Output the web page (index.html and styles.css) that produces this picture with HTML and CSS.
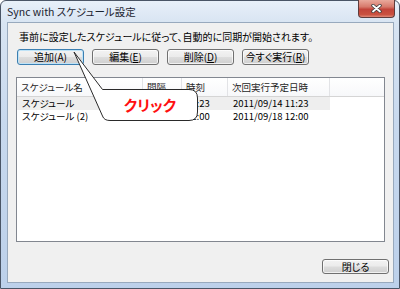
FILE: index.html
```html
<!DOCTYPE html>
<html lang="ja">
<head>
    <meta charset="UTF-8">
    <title>Sync with スケジュール設定</title>
    <link rel="stylesheet" href="styles.css">
</head>
<body>

<div class="window">
    <div class="titlebar">
        <span class="title">Sync with スケジュール設定</span>
        <span class="close">
            <svg width="11" height="9" viewBox="0 0 11 9">
                <path d="M2 1.5 L9 7.5 M9 1.5 L2 7.5" stroke="#3a3a3a" stroke-width="3.4" stroke-linecap="round"/>
                <path d="M2 1.5 L9 7.5 M9 1.5 L2 7.5" stroke="#fff" stroke-width="1.8" stroke-linecap="round"/>
            </svg>
        </span>
    </div>

    <div class="client">
        <p class="lead">事前に設定したスケジュールに従って、自動的に同期が開始されます。</p>

        <div class="toolbar">
            <button class="btn btn-default">追加(A)</button>
            <button class="btn">編集(<u>E</u>)</button>
            <button class="btn">削除(<u>D</u>)</button>
            <button class="btn">今すぐ実行(<u>R</u>)</button>
        </div>

        <div class="listview">
            <div class="lv-row lv-head">
                <span>スケジュール名</span>
                <span>間隔</span>
                <span>時刻</span>
                <span>次回実行予定日時</span>
                <span></span>
            </div>
            <div class="lv-row hot">
                <span>スケジュール</span>
                <span></span>
                <span class="time">11:23</span>
                <span>2011/09/14 11:23</span>
            </div>
            <div class="lv-row">
                <span>スケジュール (2)</span>
                <span></span>
                <span class="time">12:00</span>
                <span>2011/09/18 12:00</span>
            </div>
        </div>

        <div class="footer">
            <button class="btn">閉じる</button>
        </div>
    </div>

    <!-- annotation balloon over the dialog -->
    <svg class="balloon" width="400" height="289" viewBox="0 0 400 289">
        <path d="M74 52 L102.5 89.5 L189 89.5 Q197.5 89.5 197.5 98 L197.5 112 Q197.5 120.5 189 120.5 L110 120.5 Q104 120.5 102.5 116 Z"
              fill="#fff" stroke="#2a2a2a" stroke-width="1"/>
    </svg>
    <div class="balloon-text">クリック</div>
</div>

</body>
</html>
```

FILE: styles.css
```css
html, body {
    margin: 0;
    padding: 0;
    background: #fff;
}
body {
    font-family: "Noto Sans CJK JP", "Noto Sans", sans-serif;
    font-feature-settings: "palt";
    color: #000;
}
.window {
    position: relative;
    width: 400px;
    height: 289px;
    box-sizing: border-box;
    border: 1px solid #4a5566;
    border-radius: 6px 6px 0 0;
    background: linear-gradient(#e8f0f9 0px, #d8e4f2 22px, #c8d9ee 120px, #bcd0ea 289px);
    display: flex;
    flex-direction: column;
}
.titlebar {
    height: 21px;
    display: flex;
    align-items: flex-start;
    padding-left: 6px;
}
.title {
    font-size: 10.5px;
    line-height: 22px;
    color: #1c2430;
}
.close {
    margin-left: auto;
    margin-right: 4px;
    margin-top: -1px;
    width: 37px;
    height: 18px;
    box-sizing: border-box;
    border: 1px solid #5e3c3c;
    border-top: none;
    border-radius: 0 0 4px 4px;
    background: linear-gradient(#e9a99c 0%, #d77a6c 40%, #c2443a 55%, #c9503f 85%, #e08877 100%);
    display: flex;
    align-items: center;
    justify-content: center;
}
.close svg {
    display: block;
}
.client {
    flex: 1;
    margin: 0 5px 5px 6px;
    border: 1px solid #98a9bd;
    background: #f0f0f0;
    padding: 7px 4px 0 8px;
    display: flex;
    flex-direction: column;
}
.lead {
    margin: 0 0 0 3px;
    font-size: 10px;
    line-height: 14px;
}
.toolbar {
    margin-top: 5px;
    margin-left: 1px;
    display: flex;
    gap: 8px;
}
.btn {
    width: 67px;
    height: 16px;
    padding: 0;
    border: 1px solid #707070;
    border-radius: 3px;
    background: linear-gradient(#f3f3f3 0%, #ebebeb 48%, #dddddd 52%, #cfcfcf 100%);
    box-shadow: inset 0 0 0 1px rgba(255, 255, 255, 0.7);
    font-family: inherit;
    font-feature-settings: "palt";
    font-size: 10px;
    line-height: 14px;
    color: #000;
}
.btn u {
    text-decoration-thickness: 1px;
    text-underline-offset: 1px;
}
.btn-default {
    border-color: #3c7fb1;
    box-shadow: inset 0 0 0 1px #bfe3f7;
}
.listview {
    margin-top: 12px;
    margin-right: 4px;
    height: 165px;
    box-sizing: border-box;
    border: 1px solid #828790;
    background: #fff;
    font-size: 9.5px;
}
.lv-row {
    display: grid;
    grid-template-columns: 126px 39px 46px 102px;
    height: 13px;
    line-height: 13px;
    white-space: nowrap;
}
.lv-row span {
    padding-left: 5px;
    overflow: hidden;
}
.lv-row .time {
    padding-left: 4px;
}
.lv-head {
    grid-template-columns: 126px 39px 46px 102px 1fr;
    height: 19px;
    line-height: 18px;
    box-sizing: border-box;
    border-bottom: 1px solid #d5d5d5;
    background: linear-gradient(#ffffff, #f7f8fa);
    color: #1e1e1e;
}
.lv-head span {
    border-right: 1px solid #e2e3e6;
    padding-left: 4px;
}
.lv-head span:last-child {
    border-right: none;
}
.hot {
    background: #eeeeee;
    width: 313px;
}
.footer {
    margin-top: 17px;
    display: flex;
    justify-content: flex-end;
}
.footer .btn {
    height: 15px;
    line-height: 13px;
}
.balloon {
    position: absolute;
    left: -1px;
    top: -1px;
    pointer-events: none;
}
.balloon-text {
    position: absolute;
    left: 100px;
    top: 88px;
    width: 98px;
    height: 32px;
    line-height: 32px;
    text-align: center;
    font-size: 15px;
    font-weight: bold;
    color: #ff1010;
}
```
